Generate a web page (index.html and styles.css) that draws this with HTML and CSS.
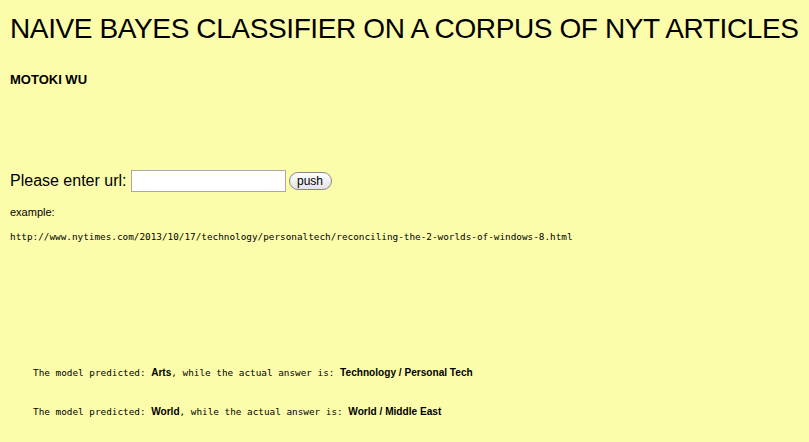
FILE: index.html
```html
<!DOCTYPE html>
<html>
<head>
<meta charset="utf-8">
<link rel="stylesheet" href="styles.css">
</head>
<body>
<h1 class="title">NAIVE BAYES CLASSIFIER ON A CORPUS OF NYT ARTICLES</h1>
<h5 class="author">MOTOKI WU</h5>
<form class="form">
  <label class="label">Please enter url:</label>
  <input class="url-input" type="text">
  <button class="push" type="button">push</button>
</form>
<p class="example">example:</p>
<p class="example-url">http://www.nytimes.com/2013/10/17/technology/personaltech/reconciling-the-2-worlds-of-windows-8.html</p>
<div class="results">
  <p class="result"><span class="mono">The model predicted: </span><b>Arts</b><span class="mono">, while the actual answer is: </span><b>Technology / Personal Tech</b></p>
  <p class="result"><span class="mono">The model predicted: </span><b>World</b><span class="mono">, while the actual answer is: </span><b>World / Middle East</b></p>
</div>
</body>
</html>
```
FILE: styles.css
```css
html, body {
  margin: 0;
  padding: 0;
  background: #fcfdab;
}
body {
  padding: 0 10px;
  font-family: "Liberation Sans", Arial, sans-serif;
  color: #000;
}
.title {
  margin: 0;
  padding-top: 12px;
  font-size: 28px;
  font-weight: normal;
  line-height: 34px;
  letter-spacing: -0.38px;
  white-space: nowrap;
}
.author {
  margin: 27px 0 0;
  font-size: 13px;
  font-weight: bold;
  line-height: 14px;
}
.form {
  margin-top: 82px;
  display: flex;
  align-items: center;
  height: 24px;
}
.label {
  font-size: 16px;
  margin-right: 4px;
}
.url-input {
  width: 151px;
  height: 18px;
  border: 1px solid #a9a9a9;
  padding: 1px;
  margin: 0;
  background: #fff;
}
.push {
  margin-left: 3px;
  width: 43px;
  height: 18px;
  border: 1px solid #888;
  border-radius: 9px;
  background: linear-gradient(#fff, #e4e4e4);
  color: #000;
  font-family: "Liberation Sans", Arial, sans-serif;
  font-size: 12px;
  padding: 0;
  line-height: 16px;
}
.example {
  margin: 12px 0 0;
  font-size: 11px;
  line-height: 14px;
}
.example-url {
  margin: 12px 0 0;
  font-family: "DejaVu Sans Mono", monospace;
  font-size: 9.35px;
  line-height: 12px;
}
.results {
  margin-top: 124px;
  padding-left: 23px;
}
.result {
  margin: 0 0 27px;
  font-size: 10.1px;
  line-height: 12px;
}
.mono {
  font-family: "DejaVu Sans Mono", monospace;
  font-size: 9.35px;
}
.result b {
  font-family: "Liberation Sans", Arial, sans-serif;
  font-weight: bold;
}
```
